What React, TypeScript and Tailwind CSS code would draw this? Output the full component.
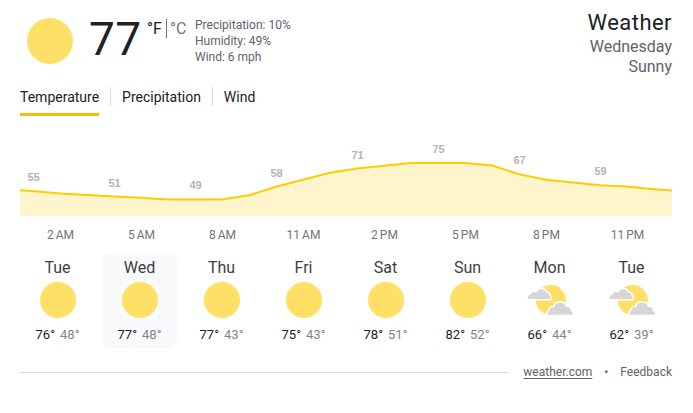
const days = [
  { name: "Tue", high: 76, low: 48, icon: "sunny" },
  { name: "Wed", high: 77, low: 48, icon: "sunny", selected: true },
  { name: "Thu", high: 77, low: 43, icon: "sunny" },
  { name: "Fri", high: 75, low: 43, icon: "sunny" },
  { name: "Sat", high: 78, low: 51, icon: "sunny" },
  { name: "Sun", high: 82, low: 52, icon: "sunny" },
  { name: "Mon", high: 66, low: 44, icon: "cloudy" },
  { name: "Tue", high: 62, low: 39, icon: "cloudy" },
];

const hours = [
  ["2", "AM"],
  ["5", "AM"],
  ["8", "AM"],
  ["11", "AM"],
  ["2", "PM"],
  ["5", "PM"],
  ["8", "PM"],
  ["11", "PM"],
];

const temps = [
  { value: 55, x: 13.5, y: 51 },
  { value: 51, x: 94.5, y: 57 },
  { value: 49, x: 175.5, y: 59 },
  { value: 58, x: 256.5, y: 47 },
  { value: 71, x: 337.5, y: 29 },
  { value: 75, x: 418.5, y: 23 },
  { value: 67, x: 499.5, y: 34 },
  { value: 59, x: 580.5, y: 45 },
];

const line =
  "0,60.3 13,61 40,63.6 67,65.1 94,66.4 121,67.8 148,69.4 202,69.4 229,65.3 256,56.8 283,49.8 310,42.8 337,38.4 364,35.8 391,33 445,33 472,35.5 499,44.2 526,49.8 553,52.4 580,55.2 607,56.6 634,59.3 652,60.4";

function DayIcon({ icon }: { icon: string }) {
  if (icon === "sunny") {
    return <div className="size-9 rounded-full bg-[#ffe066]" />;
  }
  return (
    <svg width="48" height="36" viewBox="0 0 48 36">
      <circle cx="24.8" cy="18" r="15" fill="#ffe066" />
      <g fill="#d6d6d6" stroke="white" strokeWidth="3" strokeLinejoin="round" className="[paint-order:stroke]">
        <path d="M1.8 17C1.5 14.2 2.6 12.7 4.8 12.4C5.2 10.2 8 9.4 10.3 10.6C11.3 8.2 13 7.2 15.2 7.3C17.8 7.4 19.4 8.8 19.9 10.8C22.3 10.4 23.6 11.8 23.5 13.6C24.5 14.4 24.8 15.7 24.5 17Z" />
        <path d="M21.3 32.8C21.4 30.6 22.1 29.4 23.4 28.7C23.2 26.2 25.5 24.8 27.9 25.5C28.8 22 31.2 20.4 34 20.5C37.2 20.6 39.3 22.5 40 25.2C43.1 24.7 45 26.6 44.9 29C46.5 29.7 47.3 31.2 47 32.8Z" />
      </g>
    </svg>
  );
}

function Chart() {
  return (
    <svg className="mt-[14px] block" width="652" height="86" viewBox="0 0 652 86">
      <polygon points={`0,86 ${line} 652,86`} fill="#fff5cc" />
      <polyline points={line} fill="none" stroke="#fc0" strokeWidth="2" />
      {temps.map((t) => (
        <text
          key={t.x}
          x={t.x}
          y={t.y}
          textAnchor="middle"
          className="fill-[#b5b5b5] font-['Liberation_Sans',Arial,sans-serif] text-[11px] font-bold"
        >
          {t.value}
        </text>
      ))}
    </svg>
  );
}

export default function App() {
  return (
    <div className="h-[413px] w-[693px] overflow-hidden bg-white pl-5 pr-[21px] font-[Roboto,sans-serif] text-[#202124]">
      <header className="flex h-[87px] items-start">
        <div className="ml-[7px] mt-[18px] size-[46px] rounded-full bg-[#ffe066]" />
        <div className="ml-[16px] mt-[13px] w-[53px] text-[46px] leading-[52px] tracking-[0.5px]">
          77
        </div>
        <div className="ml-[5px] mt-[19px] flex h-[19px] text-base leading-[19px]">
          <span className="w-[19px]">°F</span>
          <span className="h-[19px] w-px bg-[#70757a]" />
          <span className="ml-[3px] w-[16px] text-[#70757a]">°C</span>
        </div>
        <div className="ml-[9px] mt-[17px] text-xs leading-4 text-[#5f6368]">
          <div>Precipitation: 10%</div>
          <div>Humidity: 49%</div>
          <div>Wind: 6 mph</div>
        </div>
        <div className="ml-auto mt-[9px] text-right text-base leading-5 text-[#5f6368]">
          <div className="text-[22px] leading-7 tracking-[0.45px] text-[#202124]">
            Weather
          </div>
          <div>Wednesday</div>
          <div>Sunny</div>
        </div>
      </header>

      <nav className="flex h-[29px] text-sm leading-5">
        <div className="border-b-[3px] border-[#fbbc04]">Temperature</div>
        <div className="ml-[11px] h-[19px] w-px bg-[#dadce0]" />
        <div className="ml-[11px]">Precipitation</div>
        <div className="ml-[11px] h-[19px] w-px bg-[#dadce0]" />
        <div className="ml-[11px]">Wind</div>
      </nav>

      <Chart />

      <div className="mt-[11px] flex w-[648px] text-xs leading-4 text-[#70757a]">
        {hours.map(([hour, half]) => (
          <div key={hour + half} className="flex w-[81px] justify-center gap-[2px]">
            <span>{hour}</span>
            <span>{half}</span>
          </div>
        ))}
      </div>

      <div className="mt-[10px] flex gap-[7px]">
        {days.map((day, i) => (
          <div
            key={i}
            className={`flex h-[95px] w-[75px] shrink-0 flex-col items-center rounded-lg ${
              day.selected ? "bg-[#f8f9fb]" : ""
            }`}
          >
            <div className="mt-[5px] text-base leading-5 text-[#3c4043]">{day.name}</div>
            <div className="mt-[4px] h-9">
              <DayIcon icon={day.icon} />
            </div>
            <div className="mt-[9px] flex gap-[5px] text-[13px] leading-4">
              <span>{day.high}°</span>
              <span className="text-[#80868b]">{day.low}°</span>
            </div>
          </div>
        ))}
      </div>

      <footer className="mt-[15px] flex items-center text-xs leading-[18px] text-[#5f6368]">
        <div className="mr-[14px] h-px grow bg-[#dadce0]" />
        <a href="#" className="underline underline-offset-2">
          weather.com
        </a>
        <span className="mx-[12px]">•</span>
        <a href="#">Feedback</a>
      </footer>
    </div>
  );
}
